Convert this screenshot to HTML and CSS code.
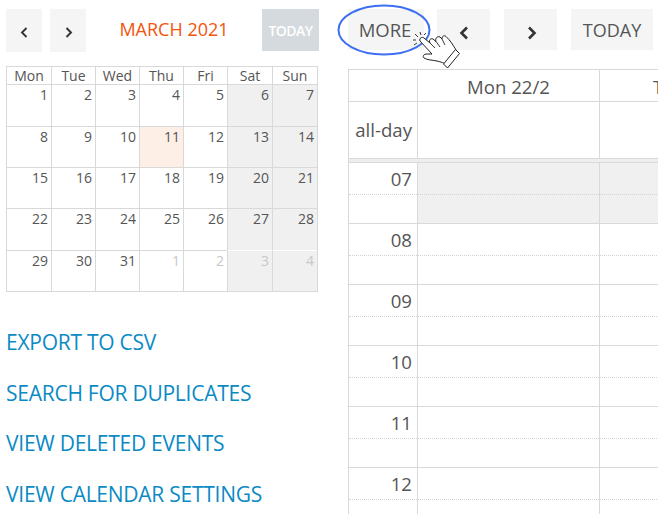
FILE: index.html
```html
<!DOCTYPE html>
<html lang="en">

<head>
  <meta charset="UTF-8">
  <title>Calendar</title>
  <link rel="stylesheet" href="styles.css">
</head>

<body>
  <div class="page">
    <div class="side">
      <div class="side-bar">
        <button class="btn btn-small"><svg width="11" height="13" viewBox="0 0 11 13"><path d="M7.500 2 3 6.500l4.500 4.500" fill="none" stroke="#333" stroke-width="1.900"/></svg></button>
        <button class="btn btn-small"><svg width="11" height="13" viewBox="0 0 11 13"><path d="M3.500 2 8 6.500l-4.500 4.500" fill="none" stroke="#333" stroke-width="1.900"/></svg></button>
        <div class="month-title">MARCH 2021</div>
        <button class="btn-today-off">TODAY</button>
      </div>

      <div class="month">
        <div class="dow">Mon</div><div class="dow">Tue</div><div class="dow">Wed</div><div class="dow">Thu</div><div class="dow">Fri</div><div class="dow">Sat</div><div class="dow">Sun</div>
        <div class="day">1</div><div class="day">2</div><div class="day">3</div><div class="day">4</div><div class="day">5</div><div class="day off">6</div><div class="day off">7</div>
        <div class="day">8</div><div class="day">9</div><div class="day">10</div><div class="day now">11</div><div class="day">12</div><div class="day off">13</div><div class="day off">14</div>
        <div class="day">15</div><div class="day">16</div><div class="day">17</div><div class="day">18</div><div class="day">19</div><div class="day off">20</div><div class="day off">21</div>
        <div class="day">22</div><div class="day">23</div><div class="day">24</div><div class="day">25</div><div class="day">26</div><div class="day off">27</div><div class="day off">28</div>
        <div class="day">29</div><div class="day">30</div><div class="day">31</div><div class="day other">1</div><div class="day other">2</div><div class="day off other">3</div><div class="day off other">4</div>
      </div>

      <div class="links">
        <a href="#">EXPORT TO CSV</a>
        <a href="#">SEARCH FOR DUPLICATES</a>
        <a href="#">VIEW DELETED EVENTS</a>
        <a href="#">VIEW CALENDAR SETTINGS</a>
      </div>
    </div>

    <div class="main">
      <div class="main-bar">
        <button class="btn btn-more">MORE</button>
        <button class="btn btn-nav"><svg width="14" height="16" viewBox="0 0 14 16"><path d="M10 2.500 4.500 8l5.500 5.500" fill="none" stroke="#333" stroke-width="2.600"/></svg></button>
        <button class="btn btn-nav btn-next"><svg width="14" height="16" viewBox="0 0 14 16"><path d="M4 2.500 9.500 8 4 13.500" fill="none" stroke="#333" stroke-width="2.600"/></svg></button>
        <button class="btn btn-today">TODAY</button>
      </div>

      <div class="week">
        <div class="week-row head-row">
          <div class="gutter"></div>
          <div class="col center">Mon 22/2</div>
          <div class="col clip">T</div>
        </div>
        <div class="week-row allday-row">
          <div class="gutter allday">all-day</div>
          <div class="col"></div>
          <div class="col"></div>
        </div>
        <div class="divider"></div>

        <div class="week-row hour first">
          <div class="gutter"><div class="half">07</div></div>
          <div class="col grey"><div class="half"></div></div>
          <div class="col grey"><div class="half"></div></div>
        </div>
        <div class="week-row hour">
          <div class="gutter"><div class="half">08</div></div>
          <div class="col"><div class="half"></div></div>
          <div class="col"><div class="half"></div></div>
        </div>
        <div class="week-row hour">
          <div class="gutter"><div class="half">09</div></div>
          <div class="col"><div class="half"></div></div>
          <div class="col"><div class="half"></div></div>
        </div>
        <div class="week-row hour">
          <div class="gutter"><div class="half">10</div></div>
          <div class="col"><div class="half"></div></div>
          <div class="col"><div class="half"></div></div>
        </div>
        <div class="week-row hour">
          <div class="gutter"><div class="half">11</div></div>
          <div class="col"><div class="half"></div></div>
          <div class="col"><div class="half"></div></div>
        </div>
        <div class="week-row hour">
          <div class="gutter"><div class="half">12</div></div>
          <div class="col"><div class="half"></div></div>
          <div class="col"><div class="half"></div></div>
        </div>
      </div>
    </div>
  </div>

  <!-- highlight ring and pointer drawn over the MORE button -->
  <svg class="ring" width="96" height="54" viewBox="0 0 96 54"><ellipse cx="47" cy="26" rx="45.500" ry="24.500" fill="none" stroke="#3d6ff0" stroke-width="2"/></svg>
  <svg class="hand" width="52" height="42" viewBox="0 0 52 42">
    <path d="M8 7 5 4M11 5l-1-3M14 5l2-2M6 10H3M7 13l-3 2" fill="none" stroke="#222" stroke-width="0.900"/>
    <path d="M10 11C9 8 12 6.500 14 8l6 5C18.500 10 20.500 8 23 9l3 2.500C25 8 27 6 30 7l2 2C32 6 34 5 36 6.500 40 10 43 15 46 20l1 4-9 11C34 33 31 32 27 31 22 30 17 30 14 28 12 26 14 24 17 24h5z" fill="#fff" stroke="#222" stroke-width="1" stroke-linejoin="round"/>
    <path d="M20 13l5 5M26 11.500l4 5.500M32 9l3 6" fill="none" stroke="#222" stroke-width="0.900"/>
    <path d="M45.500 19.500 49.500 23.500 37.500 38 33.500 34z" fill="#fff" stroke="#222" stroke-width="1" stroke-linejoin="round"/>
  </svg>
</body>

</html>
```

FILE: styles.css
```css
* {
  box-sizing: border-box;
}

html,
body {
  margin: 0;
  height: 514px;
  overflow: hidden;
}

body {
  position: relative;
  width: 658px;
  font-family: "Open Sans", sans-serif;
  color: #555;
  background-color: #fff;
}

button {
  font-family: inherit;
  border: 0;
  padding: 0;
}

.page {
  display: flex;
  height: 514px;
}

.side {
  width: 342px;
  padding: 9px 0 0 6px;
  flex-shrink: 0;
}

.side-bar {
  display: flex;
  height: 43px;
  width: 313px;
}

.btn {
  display: flex;
  align-items: center;
  justify-content: center;
  background-color: #f5f5f5;
  color: #555;
}

.btn-small {
  width: 36px;
  height: 43px;
  margin-right: 8px;
  padding-top: 3px;
}

.month-title {
  width: 176px;
  margin-left: -8px;
  padding-top: 8px;
  text-align: center;
  font-size: 18px;
  color: #f4530c;
}

.btn-today-off {
  width: 57px;
  height: 42px;
  background-color: #d4dadd;
  color: #fff;
  font-size: 14px;
  font-weight: 600;
  letter-spacing: -0.5px;
}

.month {
  display: grid;
  grid-template-columns: 45px 44px 44px 44px 44px 45px 45px;
  grid-template-rows: 18px 42px 41px 41px 42px 41px;
  width: 312px;
  margin-top: 14px;
  border-right: 1px solid #d9d9d9;
  border-bottom: 1px solid #d9d9d9;
}

.dow,
.day {
  border-top: 1px solid #d9d9d9;
  border-left: 1px solid #d9d9d9;
  font-size: 14px;
}

.dow {
  line-height: 17px;
  text-align: center;
}

.day {
  padding-right: 3px;
  line-height: 20px;
  text-align: right;
}

.off {
  background-color: #f0f0f0;
}

.now {
  background-color: #fdeee6;
}

.other {
  color: #c8c8c8;
}

.off.other {
  border-top-color: #fff;
}

.links {
  display: flex;
  flex-direction: column;
  gap: 20.7px;
  margin-top: 35px;
}

.links a {
  color: #0b8ac4;
  font-size: 21px;
  line-height: 30px;
  letter-spacing: -0.25px;
  text-decoration: none;
  white-space: nowrap;
}

.main {
  flex: 1;
  min-width: 0;
  padding: 9px 0 0 6px;
}

.main-bar {
  display: flex;
  height: 41px;
}

.btn-more {
  width: 76px;
  height: 41px;
  margin-right: 13px;
  padding-right: 2px;
  font-size: 18.5px;
}

.btn-nav {
  width: 53px;
  height: 41px;
  margin-right: 14px;
  padding-top: 6px;
}

.btn-next {
  padding-left: 2px;
}

.btn-today {
  width: 82px;
  height: 41px;
  font-size: 18px;
}

.week {
  margin-top: 19px;
  border-top: 1px solid #d9d9d9;
  border-left: 1px solid #d9d9d9;
  font-size: 18.6px;
}

.week-row {
  display: grid;
  grid-template-columns: 68px 182px 60px;
}

.head-row {
  height: 32px;
  line-height: 34px;
  border-bottom: 1px solid #d9d9d9;
}

.allday-row {
  height: 56px;
}

.gutter {
  padding-right: 5px;
  text-align: right;
}

.allday {
  padding-top: 15px;
  line-height: 26px;
}

.col {
  border-left: 1px solid #d9d9d9;
}

.center {
  text-align: center;
}

.clip {
  padding-left: 53px;
  overflow: hidden;
}

.divider {
  height: 5px;
  background-color: #eee;
  border-top: 1px solid #d9d9d9;
  border-bottom: 1px solid #d9d9d9;
}

.hour {
  height: 61px;
  border-top: 1px solid #d9d9d9;
}

.hour.first {
  height: 60px;
  border-top: 0;
}

.hour .gutter {
  padding-right: 0;
}

.half {
  height: 32px;
  line-height: 31px;
  padding-right: 5px;
  border-bottom: 1px dotted #d4d4d4;
}

.grey {
  background-color: #f0f0f0;
}

.ring {
  position: absolute;
  left: 337px;
  top: 4px;
}

.hand {
  position: absolute;
  left: 410px;
  top: 30px;
}
```
